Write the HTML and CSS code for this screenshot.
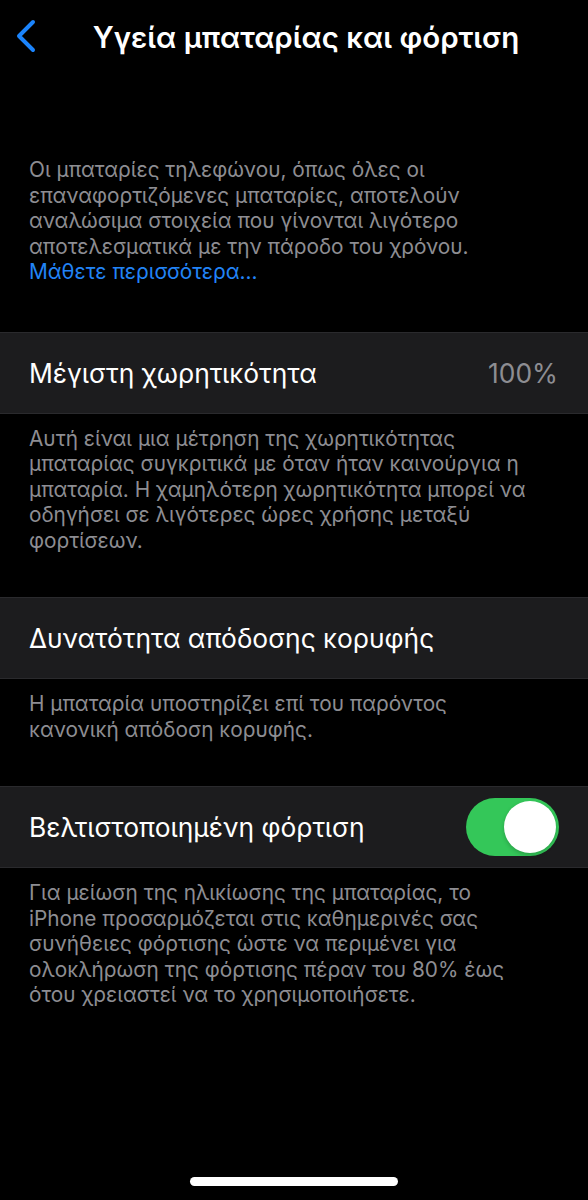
FILE: index.html
```
<!DOCTYPE html>
<html lang="el">
<head>
<meta charset="utf-8">
<title>Υγεία μπαταρίας και φόρτιση</title>
<link rel="stylesheet" href="styles.css">
</head>
<body>
<div class="screen">
  <header class="nav">
    <span class="back">
      <svg width="22" height="34" viewBox="0 0 22 34"><path d="M18 3 L4 17 L18 31" fill="none" stroke="#1b84fc" stroke-width="4" stroke-linecap="round" stroke-linejoin="round"/></svg>
    </span>
    <h1 class="title">Υγεία μπαταρίας και φόρτιση</h1>
  </header>

  <p class="intro">Οι μπαταρίες τηλεφώνου, όπως όλες οι<br>επαναφορτιζόμενες μπαταρίες, αποτελούν<br>αναλώσιμα στοιχεία που γίνονται λιγότερο<br>αποτελεσματικά με την πάροδο του χρόνου.<br><span class="link">Μάθετε περισσότερα...</span></p>

  <div class="row">
    <span class="label">Μέγιστη χωρητικότητα</span>
    <span class="value">100%</span>
  </div>
  <p class="note">Αυτή είναι μια μέτρηση της χωρητικότητας<br>μπαταρίας συγκριτικά με όταν ήταν καινούργια η<br>μπαταρία. Η χαμηλότερη χωρητικότητα μπορεί να<br>οδηγήσει σε λιγότερες ώρες χρήσης μεταξύ<br>φορτίσεων.</p>

  <div class="row">
    <span class="label">Δυνατότητα απόδοσης κορυφής</span>
  </div>
  <p class="note">Η μπαταρία υποστηρίζει επί του παρόντος<br>κανονική απόδοση κορυφής.</p>

  <div class="row">
    <span class="label">Βελτιστοποιημένη φόρτιση</span>
    <span class="toggle"><span class="knob"></span></span>
  </div>
  <p class="note">Για μείωση της ηλικίωσης της μπαταρίας, το<br>iPhone προσαρμόζεται στις καθημερινές σας<br>συνήθειες φόρτισης ώστε να περιμένει για<br>ολοκλήρωση της φόρτισης πέραν του 80% έως<br>ότου χρειαστεί να το χρησιμοποιήσετε.</p>

  <div class="home-indicator"></div>
</div>
</body>
</html>
```
FILE: styles.css
```
html, body {
  margin: 0;
  padding: 0;
  background: #000;
}
.screen {
  position: relative;
  width: 588px;
  height: 1200px;
  background: #000;
  font-family: Inter, "Noto Sans", "DejaVu Sans", sans-serif;
  color: #fff;
  overflow: hidden;
}
.nav {
  position: relative;
  height: 75px;
  display: flex;
  align-items: center;
  justify-content: center;
}
.back {
  position: absolute;
  left: 15px;
  top: 19px;
  display: flex;
}
.title {
  margin: 0 0 0 24px;
  font-size: 29.5px;
  font-weight: 600;
  line-height: 34px;
  position: relative;
  top: -1px;
}
.intro {
  margin: 82px 0 0;
  padding: 0 20px 47px 29px;
  font-size: 20.8px;
  line-height: 25.5px;
  white-space: nowrap;
  color: #8d8d92;
}
.link {
  color: #2284f7;
}
.row {
  display: flex;
  align-items: center;
  justify-content: space-between;
  height: 80px;
  padding: 0 30px 0 29px;
  background: #1c1c1e;
  border-top: 1px solid #2a2a2d;
  border-bottom: 1px solid #2a2a2d;
}
.label {
  font-size: 26.4px;
  color: #fff;
}
.value {
  font-size: 26.4px;
  color: #8d8d92;
}
.toggle {
  display: flex;
  align-items: center;
  justify-content: flex-end;
  width: 93px;
  height: 58px;
  border-radius: 29px;
  background: #34c759;
  margin-right: -1px;
  padding: 3px;
  box-sizing: border-box;
}
.knob {
  width: 52px;
  height: 52px;
  border-radius: 50%;
  background: #fff;
  box-shadow: 0 2px 4px rgba(0,0,0,0.2);
}
.note {
  margin: 0;
  padding: 12px 20px 44px 29px;
  font-size: 20.8px;
  line-height: 25.5px;
  white-space: nowrap;
  color: #8d8d92;
}
.home-indicator {
  position: absolute;
  left: 190px;
  top: 1177px;
  width: 208px;
  height: 9px;
  border-radius: 5px;
  background: #fff;
}
```
